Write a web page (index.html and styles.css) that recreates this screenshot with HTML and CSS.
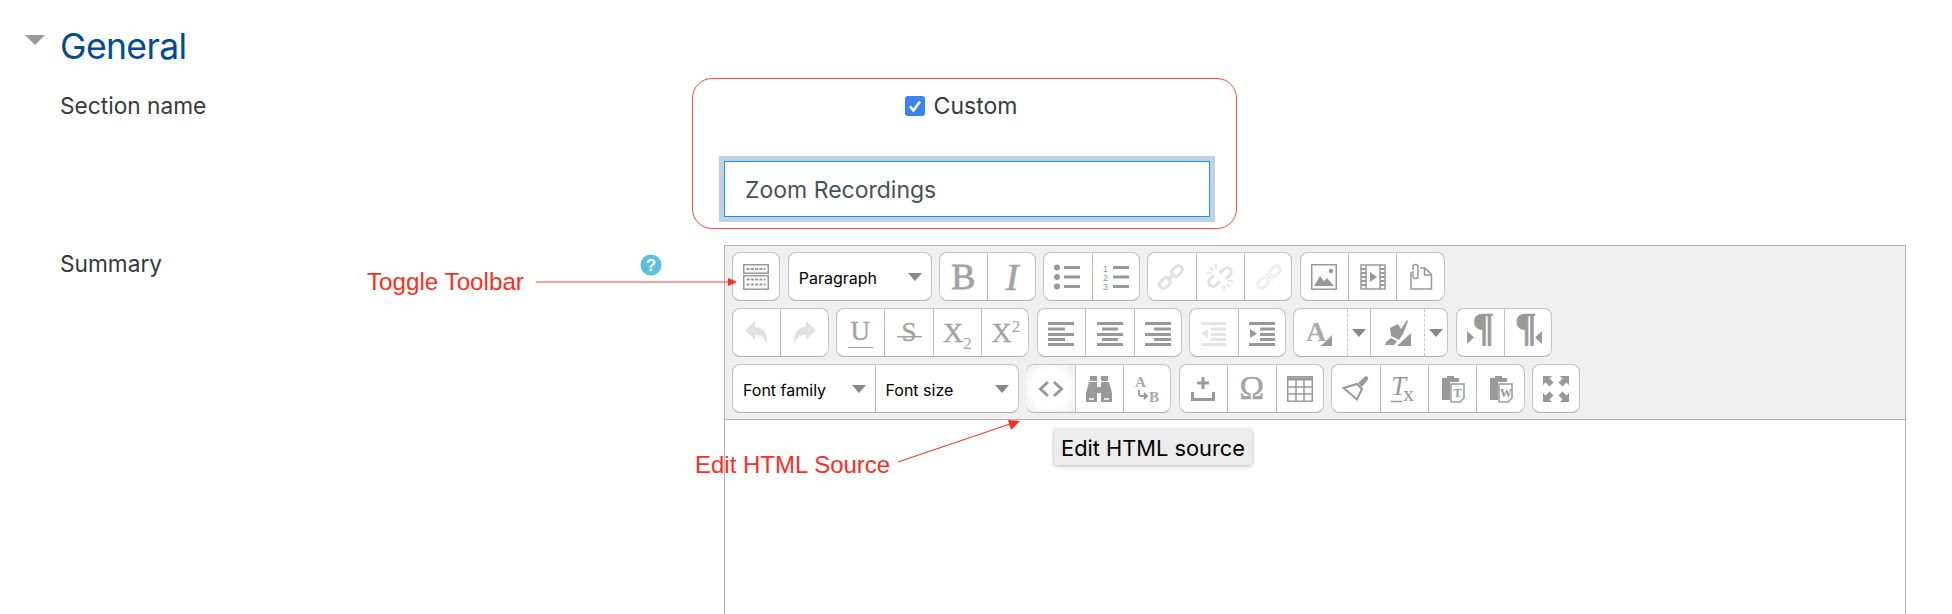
FILE: index.html
```html
<!DOCTYPE html>
<html lang="en">
<head>
<meta charset="utf-8">
<title>General</title>
<link rel="stylesheet" href="styles.css">
</head>
<body>
<main class="page">
  <header class="section-head">
    <span class="collapse"></span>
    <h2 class="section-title">General</h2>
  </header>

  <section class="row-name">
    <div class="label">Section name</div>
    <div class="callout">
      <label class="custom"><span class="check"><svg viewBox="0 0 20 20"><path d="M5 10.500l3.500 4L15 5.500" fill="none" stroke="#fff" stroke-width="2.600"/></svg></span>Custom</label>
      <div class="input-halo"><div class="input">Zoom Recordings</div></div>
    </div>
  </section>

  <section class="row-summary">
    <div class="label label-help">
      <span>Summary</span>
      <svg class="help" viewBox="0 0 22 22"><circle cx="11" cy="11" r="10.500" fill="#5bc0de"/><text x="11" y="17" text-anchor="middle" class="help-q">?</text></svg>
    </div>
    <div class="editor">
      <div class="toolbar">
        <div class="tb-row">
          <div class="grp">
            <button class="btn"><svg class="ic" viewBox="0 0 26 26"><g fill="none" stroke="#999" stroke-width="1.500"><rect x=".75" y=".75" width="24.500" height="8.500"/><rect x=".75" y="11.750" width="24.500" height="13.500"/></g><g fill="none" stroke="#999" stroke-width="2" stroke-dasharray="3 1.300"><path d="M3.500 5h19M3.500 15.500h19M3.500 20.500h19"/></g></svg></button>
          </div>
          <div class="grp"><button class="sel sel-para"><span>Paragraph</span><i class="caret"></i></button></div>
          <div class="grp">
            <button class="btn"><span class="gl gl-b">B</span></button>
            <button class="btn"><span class="gl gl-i">I</span></button>
          </div>
          <div class="grp">
            <button class="btn"><svg class="ic" viewBox="0 0 26 26"><g fill="#999"><circle cx="3" cy="3.500" r="3"/><circle cx="3" cy="13" r="3"/><circle cx="3" cy="22.500" r="3"/><rect x="10" y="2" width="16" height="3"/><rect x="10" y="11.500" width="16" height="3"/><rect x="10" y="21" width="16" height="3"/></g></svg></button>
            <button class="btn"><svg class="ic" viewBox="0 0 26 26"><g fill="#999"><rect x="10" y="2" width="16" height="3"/><rect x="10" y="11.500" width="16" height="3"/><rect x="10" y="21" width="16" height="3"/></g><g class="tiny"><text x="0" y="8">1</text><text x="0" y="17">2</text><text x="0" y="26">3</text></g></svg></button>
          </div>
          <div class="grp">
            <button class="btn"><svg class="ic" viewBox="0 0 26 26"><g fill="none" stroke="#e0e0e0" stroke-width="3"><rect x="13" y="3" width="12" height="8" rx="4" transform="rotate(-45 19 7)"/><rect x="1" y="15" width="12" height="8" rx="4" transform="rotate(-45 7 19)"/></g><path d="M9.500 16.500l7-7" stroke="#e0e0e0" stroke-width="3"/></svg></button>
            <button class="btn"><svg class="ic" viewBox="0 0 26 26"><g fill="none" stroke="#e0e0e0" stroke-width="3"><path d="M13 9l4-4a4.200 4.200 0 0 1 6 6l-4 4"/><path d="M13 17l-4 4a4.200 4.200 0 0 1-6-6l4-4"/></g><path d="M9 0v5M0 9h5M3 3l3 3M17 26v-5M26 17h-5M23 23l-3-3" stroke="#e0e0e0" stroke-width="1.500"/></svg></button>
            <button class="btn"><svg class="ic" viewBox="0 0 26 26"><g fill="none" stroke="#efefef" stroke-width="3"><rect x="13" y="3" width="12" height="8" rx="4" transform="rotate(-45 19 7)"/><rect x="1" y="15" width="12" height="8" rx="4" transform="rotate(-45 7 19)"/></g><path d="M9 9l8 8" stroke="#efefef" stroke-width="2"/></svg></button>
          </div>
          <div class="grp">
            <button class="btn"><svg class="ic" viewBox="0 0 26 26"><rect x=".750" y=".750" width="24.500" height="24.500" fill="#fff" stroke="#999" stroke-width="1.500"/><path d="M3 22l6-10 4 5 3-3 7 8z" fill="#999"/><circle cx="20" cy="7" r="2.200" fill="#999"/></svg></button>
            <button class="btn"><svg class="ic" viewBox="0 0 26 26"><path d="M1 1h24v24H1z" fill="none" stroke="#999" stroke-width="1.500"/><path d="M6 1v24M20 1v24" stroke="#999" stroke-width="1.500"/><path d="M1 5h5M1 9h5M1 13h5M1 17h5M1 21h5M20 5h5M20 9h5M20 13h5M20 17h5M20 21h5" stroke="#999" stroke-width="2"/><path d="M10 8l7 5-7 5z" fill="#999"/></svg></button>
            <button class="btn"><svg class="ic" viewBox="0 0 26 26"><path d="M3 8v17h20.500V10.500L17 4h-5" fill="none" stroke="#999" stroke-width="1.500"/><path d="M5 6V3a2.500 2.500 0 0 1 5 0v9a2.500 2.500 0 0 1-5 0V7M16.500 4v7h7" fill="none" stroke="#999" stroke-width="1.500"/></svg></button>
          </div>
        </div>

        <div class="tb-row">
          <div class="grp">
            <button class="btn"><svg class="ic" viewBox="0 0 26 26"><path d="M2 10L12 1v6c9 0 13 7 12 18-2-8-6-10-12-10v5z" fill="#e2e2e2"/></svg></button>
            <button class="btn"><svg class="ic" viewBox="0 0 26 26"><path d="M24 10L14 1v6C5 7 1 14 2 25c2-8 6-10 12-10v5z" fill="#e2e2e2"/></svg></button>
          </div>
          <div class="grp">
            <button class="btn"><span class="gl gl-u">U</span></button>
            <button class="btn"><span class="gl gl-s">S</span></button>
            <button class="btn"><span class="gl gl-x">X<sub>2</sub></span></button>
            <button class="btn"><span class="gl gl-x">X<sup>2</sup></span></button>
          </div>
          <div class="grp">
            <button class="btn"><svg class="ic" viewBox="0 0 26 26"><path d="M0 2h26v3H0zM0 7.500h17v3H0zM0 13h26v3H0zM0 18h17v3H0zM0 23h26v3H0z" fill="#999"/></svg></button>
            <button class="btn"><svg class="ic" viewBox="0 0 26 26"><path d="M0 2h26v3H0zM5 7.500h16v3H5zM0 13h26v3H0zM5 18h16v3H5zM0 23h26v3H0z" fill="#999"/></svg></button>
            <button class="btn"><svg class="ic" viewBox="0 0 26 26"><path d="M0 2h26v3H0zM9 7.500h17v3H9zM0 13h26v3H0zM9 18h17v3H9zM0 23h26v3H0z" fill="#999"/></svg></button>
          </div>
          <div class="grp">
            <button class="btn"><svg class="ic" viewBox="0 0 26 26"><path d="M1 2h25v3H1zM11 7.500h15v3H11zM11 13h15v3H11zM11 18h15v3H11zM1 23h25v3H1zM8 9v9l-7-4.500z" fill="#e4e4e4"/></svg></button>
            <button class="btn"><svg class="ic" viewBox="0 0 26 26"><path d="M0 2h26v3H0zM11 7.500h15v3H11zM11 13h15v3H11zM11 18h15v3H11zM0 23h26v3H0zM1 9v9l7-4.500z" fill="#999"/></svg></button>
          </div>
          <div class="grp">
            <button class="btn btn-col"><svg class="ic" viewBox="0 0 26 26"><text x="-1" y="21" class="col-a">A</text><path d="M25 15v11H14z" fill="#999"/></svg></button>
            <button class="split"><i class="caret"></i></button>
            <button class="btn btn-col sep"><svg class="ic" viewBox="0 0 26 26"><path d="M5 8l8-4 3 5 6-9 1 1-5 13-4 6-8-4zM1 22l5-4 6 3-3 4H0z" fill="#999"/><path d="M26 13v13H12z" fill="#999"/></svg></button>
            <button class="split"><i class="caret"></i></button>
          </div>
          <div class="grp">
            <button class="btn"><svg class="ic" viewBox="0 0 26 26"><text x="27" y="20" text-anchor="end" class="pil">¶</text><path d="M0 11v13l7-6.500z" fill="#999"/></svg></button>
            <button class="btn"><svg class="ic" viewBox="0 0 26 26"><text x="-1" y="20" class="pil">¶</text><path d="M26 11v13l-7-6.500z" fill="#999"/></svg></button>
          </div>
        </div>

        <div class="tb-row">
          <div class="grp">
            <button class="sel sel-fam"><span>Font family</span><i class="caret"></i></button>
            <button class="sel sel-size"><span>Font size</span><i class="caret"></i></button>
          </div>
          <div class="grp">
            <button class="btn btn-hover"><svg class="ic" viewBox="0 0 26 26"><path d="M10 6l-7.500 7 7.500 7M16 6l7.500 7-7.500 7" fill="none" stroke="#999" stroke-width="3"/></svg></button>
            <button class="btn"><svg class="ic" viewBox="0 0 26 26"><path d="M4 0h7v5H4zM15 0h7v5h-7zM3 6h8v5h4V6h8l3 11v9H15v-9h-4v9H0v-9z" fill="#999"/><path d="M3 23h5M18 23h5" stroke="#fff" stroke-width="1.500"/></svg></button>
            <button class="btn"><svg class="ic" viewBox="0 0 26 26"><text x="0" y="11" class="rep">A</text><text x="14" y="26" class="rep">B</text><path d="M4 14v4a2 2 0 0 0 2 2h6M9 17l3 3-3 3" fill="none" stroke="#999" stroke-width="1.800"/></svg></button>
          </div>
          <div class="grp">
            <button class="btn"><svg class="ic" viewBox="0 0 26 26"><path d="M11.500 1h3v4.500H19v3h-4.500V13h-3V8.500H7v-3h4.500zM1 16h3v6h18v-6h3v9H1z" fill="#999"/></svg></button>
            <button class="btn"><span class="gl gl-om">Ω</span></button>
            <button class="btn"><svg class="ic" viewBox="0 0 26 26"><path d="M.75.750h24.500v24.500H.75z" fill="none" stroke="#999" stroke-width="1.500"/><path d="M0 1.500h26v3H0z" fill="#999"/><path d="M.75 11h24.500M.75 18h24.500M9 3v22M17 3v22" stroke="#999" stroke-width="1.500"/></svg></button>
          </div>
          <div class="grp">
            <button class="btn"><svg class="ic" viewBox="0 0 26 26"><path d="M16 7l7-6.500a2.200 2.200 0 0 1 3 3L20 11z" fill="#999"/><path d="M1.500 12L15 8l5 5-5 10.500z" fill="#fff" stroke="#999" stroke-width="2"/></svg></button>
            <button class="btn"><svg class="ic" viewBox="0 0 26 26"><text x="0" y="19" class="tx-t">T</text><text x="12" y="25" class="tx-x">x</text><path d="M0 25.500h11" stroke="#999" stroke-width="1.500"/></svg></button>
            <button class="btn"><svg class="ic" viewBox="0 0 26 26"><path d="M7 0h7v2h5v4H10v18H2V2h5z" fill="#999"/><path d="M11 8h13v14l-4 4h-9z" fill="#fff" stroke="#999" stroke-width="1.500"/><text x="13.500" y="21" class="pas">T</text></svg></button>
            <button class="btn"><svg class="ic" viewBox="0 0 26 26"><path d="M7 0h7v2h5v4H10v18H2V2h5z" fill="#999"/><path d="M11 8h13v14l-4 4h-9z" fill="#fff" stroke="#999" stroke-width="1.500"/><text x="12" y="21" class="pas">W</text></svg></button>
          </div>
          <div class="grp">
            <button class="btn"><svg class="ic" viewBox="0 0 26 26"><path d="M0 0h9L6.500 2.500l4 4-4 4-4-4L0 9zM26 0v9l-2.500-2.500-4 4-4-4 4-4L17 0zM0 26v-9l2.500 2.500 4-4 4 4-4 4L9 26zM26 26h-9l2.500-2.500-4-4 4-4 4 4L26 17z" fill="#999"/></svg></button>
          </div>
        </div>
      </div>
      <div class="edit-area"></div>
    </div>
  </section>
</main>

<div class="tooltip">Edit HTML source</div>
<div class="note note-toggle">Toggle Toolbar</div>
<div class="note note-source">Edit HTML Source</div>
<svg class="arrows" viewBox="0 0 1952 614">
  <path d="M536 282H730" stroke="#ff3b30" stroke-width="1"/>
  <path d="M737 282l-9-4v8z" fill="#ff2d20"/>
  <path d="M898 462l112-38" stroke="#ff3b30" stroke-width="1.200"/>
  <path d="M1020 421l-12-1 3 10z" fill="#ff2d20"/>
</svg>
</body>
</html>
```

FILE: styles.css
```css
* { box-sizing: border-box; }
html, body { margin: 0; height: 614px; overflow: hidden; background: #fff; }
body { position: relative; font-family: Inter, "Liberation Sans", sans-serif; color: #373a3c; }

.section-head { display: flex; align-items: center; height: 78px; padding: 16px 0 0 25px; gap: 15px; }
.collapse { width: 0; height: 0; border: 10px solid transparent; border-top: 10px solid #999; border-bottom: 0; margin-top: -14px; }
.section-title { margin: 0; font: 400 35.5px/1 Inter, "Liberation Sans", sans-serif; color: #004c8f; letter-spacing: -0.6px; }

.label { padding: 15px 0 0 60px; font-size: 22.7px; line-height: 26px; color: #373a3c; }
.row-name { display: grid; grid-template-columns: 692px 545px; }
.callout { height: 151px; border: 1.5px solid #ff4a42; border-radius: 20px; padding: 16px 21px 0 26px; }
.custom { display: flex; justify-content: center; align-items: center; gap: 9px; height: 22px; font-size: 23px; color: #373a3c; padding-right: 12px; }
.check { width: 20px; height: 20px; border-radius: 3px; background: #3b82f6; display: block; }
.check svg { display: block; width: 20px; height: 20px; }
.input-halo { margin-top: 39px; height: 66px; padding: 5px; background: #bed2e0; }
.input { height: 56px; border: 1px solid #1e90ff; background: #fff; padding: 1px 0 0 20px; font-size: 23px; line-height: 54px; color: #495057; }

.row-summary { display: grid; grid-template-columns: 724px 1182px; margin-top: 16px; }
.label-help { display: flex; justify-content: space-between; align-items: flex-start; padding: 6px 62px 0 60px; }
.help { width: 22px; height: 22px; margin-top: 3px; }
.help-q { font: 700 17px "Liberation Sans", sans-serif; fill: #fff; }

.editor { border: 1px solid #b3b3b3; border-bottom: 0; height: 369px; }
.toolbar { background: #f0f0f0; border-bottom: 1px solid #b3b3b3; padding: 6px 7px 5px; display: flex; flex-direction: column; gap: 7px; height: 174px; }
.tb-row { display: flex; gap: 7.4px; height: 49px; }
.grp { display: flex; height: 49px; background: #fff; border: 1px solid #c4c4c4; border-bottom-color: #b3b3b3; border-radius: 8px; }
.btn, .sel, .split { height: 47px; padding: 0; border: 0; background: transparent; display: flex; align-items: center; justify-content: center; font-family: inherit; color: #000; }
.btn { width: 48.35px; }
.btn:first-child { margin-left: -1px; }
.btn:last-child { margin-right: -1px; }
.btn + .btn { border-left: 1px solid #c4c4c4; }
.btn-hover { border-radius: 8px 0 0 8px; background: radial-gradient(circle, #fff 55%, #ececec 100%); }
.btn-col { width: 54px; }
.btn-col.sep { border-left: 1px solid #c4c4c4; }
.split { width: 23px; border-left: 1px dashed #c8c8c8; }
.ic { width: 26px; height: 26px; display: block; overflow: visible; }

.caret { display: block; width: 0; height: 0; border: 7.5px solid transparent; border-top: 8px solid #888; border-bottom: 0; }
.sel { justify-content: space-between; font-size: 16px; padding: 3px 9px 0 10px; }
.sel .caret { margin-top: -3px; }
.sel-para { width: 142px; }
.sel-fam { width: 142.5px; border-right: 1px solid #c4c4c4; }
.sel-size { width: 142.5px; }

.gl { font-family: "Liberation Serif", serif; color: #a3a3a3; line-height: 1; display: block; }
.gl-b { font-size: 36px; -webkit-text-stroke: .8px #a3a3a3; }
.gl-i { font-size: 38px; font-style: italic; -webkit-text-stroke: .7px #a3a3a3; }
.gl-u { font-size: 27px; border-bottom: 1.500px solid #a3a3a3; padding: 0 3px 2px; -webkit-text-stroke: .4px #a3a3a3; }
.gl-s { font-size: 27px; background: linear-gradient(#a3a3a3, #a3a3a3) center 66% / 100% 1.500px no-repeat; padding: 0 5px; -webkit-text-stroke: .4px #a3a3a3; }
.gl-x { font-size: 28px; -webkit-text-stroke: .4px #a3a3a3; }
.gl-x sub, .gl-x sup { font-size: 17px; line-height: 0; -webkit-text-stroke: 0; }
.gl-om { font-size: 33px; -webkit-text-stroke: .5px #a3a3a3; }

.tiny { font: 400 9px "Liberation Sans", sans-serif; fill: #999; }
.col-a { font: 700 28px "Liberation Serif", serif; fill: #aaa; }
.pil { font: 700 40px "Liberation Serif", serif; fill: #999; stroke: #999; stroke-width: .6px; }
.rep { font: 700 15px "Liberation Serif", serif; fill: #aaa; }
.pas { font: 700 12px "Liberation Serif", serif; fill: #999; }
.tx-t { font: italic 400 27px "Liberation Serif", serif; fill: #999; }
.tx-x { font: 400 22px "Liberation Serif", serif; fill: #999; }

.edit-area { background: #fff; height: 194px; }

.tooltip { position: absolute; left: 1054px; top: 429px; width: 198px; height: 36px; background: #ececec; border-radius: 2px; box-shadow: 0 1px 4px rgba(0,0,0,.3); font-size: 21.800px; line-height: 38px; color: #000; text-align: center; white-space: nowrap; }
.note { position: absolute; font-family: "Liberation Sans", sans-serif; color: #ff2d20; white-space: nowrap; line-height: 30px; }
.note-toggle { left: 367px; top: 267px; font-size: 24.200px; }
.note-source { left: 695px; top: 450px; font-size: 24px; }
.arrows { position: absolute; left: 0; top: 0; width: 1952px; height: 614px; pointer-events: none; }
```
